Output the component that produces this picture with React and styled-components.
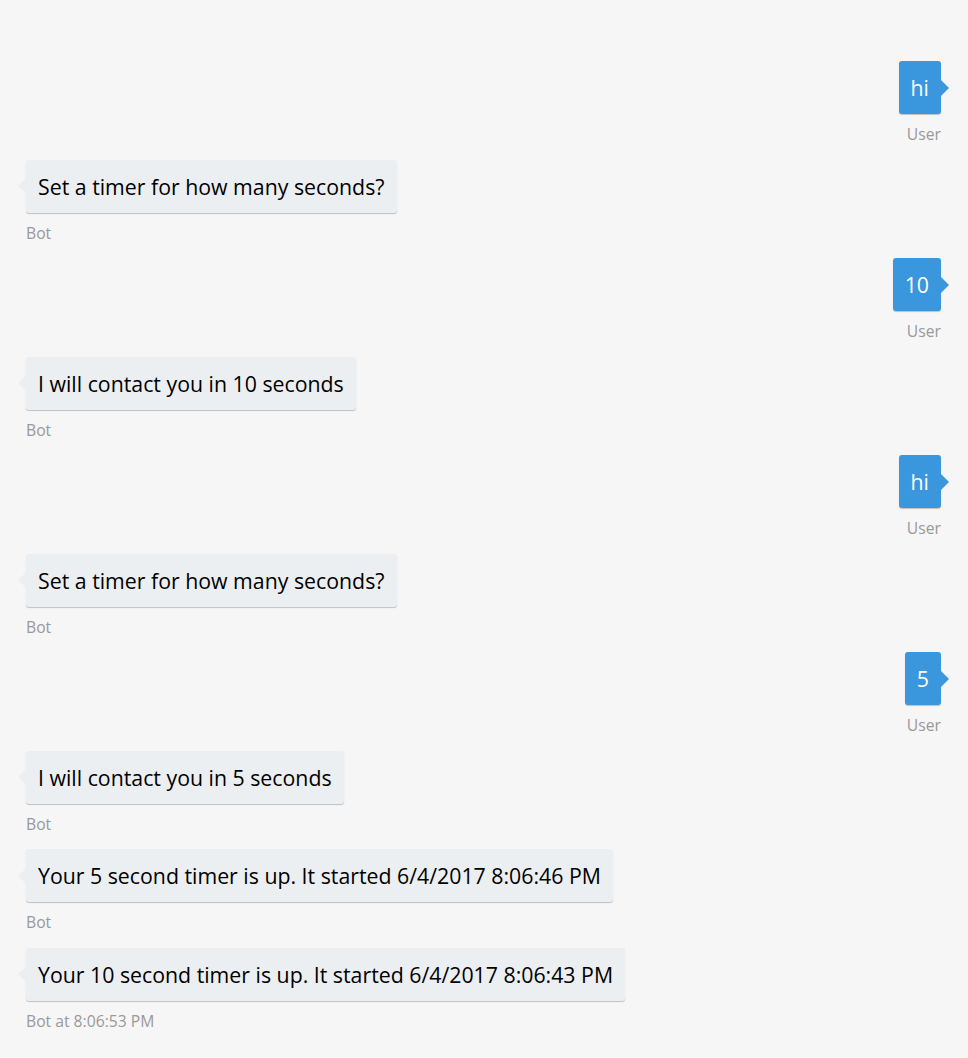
import React from 'react';
import styled, { createGlobalStyle } from 'styled-components';

const GlobalStyle = createGlobalStyle`
  html, body {
    margin: 0;
    padding: 0;
    background: #f6f6f6;
  }
  body {
    font-family: "Open Sans", "Noto Sans", sans-serif;
  }
`;

const messages = [
  { from: 'user', text: 'hi', label: 'User' },
  { from: 'bot', text: 'Set a timer for how many seconds?', label: 'Bot' },
  { from: 'user', text: '10', label: 'User' },
  { from: 'bot', text: 'I will contact you in 10 seconds', label: 'Bot' },
  { from: 'user', text: 'hi', label: 'User' },
  { from: 'bot', text: 'Set a timer for how many seconds?', label: 'Bot' },
  { from: 'user', text: '5', label: 'User' },
  { from: 'bot', text: 'I will contact you in 5 seconds', label: 'Bot' },
  { from: 'bot', text: 'Your 5 second timer is up. It started 6/4/2017 8:06:46 PM', label: 'Bot' },
  { from: 'bot', text: 'Your 10 second timer is up. It started 6/4/2017 8:06:43 PM', label: 'Bot at 8:06:53 PM' },
];

const Chat = styled.div`
  min-height: 1058px;
  box-sizing: border-box;
  padding: 61px 27px 0 26px;
  display: flex;
  flex-direction: column;
`;

const Message = styled.div`
  display: flex;
  flex-direction: column;
  align-items: ${(p) => (p.$me ? 'flex-end' : 'flex-start')};
  margin-bottom: 15.5px;
`;

const Bubble = styled.div`
  position: relative;
  box-sizing: border-box;
  height: 53px;
  padding: 0 12px;
  display: flex;
  align-items: center;
  border-radius: 3px;
  font-size: 21.3px;
  color: ${(p) => (p.$me ? '#ffffff' : '#000000')};
  background: ${(p) => (p.$me ? '#3a96dd' : '#eceff1')};
  box-shadow: 0 1px 1px rgba(0, 0, 0, 0.22);
  white-space: nowrap;
`;

const Callout = styled.svg`
  position: absolute;
  top: 50%;
  margin-top: -8px;
  width: 8px;
  height: 16px;
  ${(p) => (p.$me ? 'right: -8px;' : 'left: -8px;')}
`;

const From = styled.div`
  margin-top: 10px;
  font-size: 15.7px;
  line-height: 20px;
  color: #999999;
`;

function ChatMessage({ from, text, label }) {
  const me = from === 'user';
  return (
    <Message $me={me}>
      <Bubble $me={me}>
        {text}
        <Callout $me={me} viewBox="0 0 8 16">
          {me ? (
            <polygon points="0,0 8,8 0,16" fill="#3a96dd" />
          ) : (
            <polygon points="8,0 0,8 8,16" fill="#eceff1" />
          )}
        </Callout>
      </Bubble>
      <From>{label}</From>
    </Message>
  );
}

export default function App() {
  return (
    <>
      <GlobalStyle />
      <Chat>
        {messages.map((m, i) => (
          <ChatMessage key={i} {...m} />
        ))}
      </Chat>
    </>
  );
}
